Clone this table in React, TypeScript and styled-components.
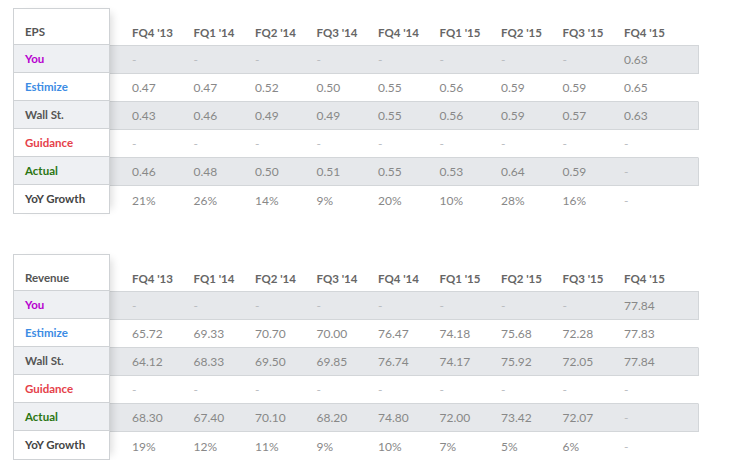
import styled, { createGlobalStyle } from "styled-components";

const GlobalStyle = createGlobalStyle`
  body {
    margin: 0;
    background: #fff;
    font-family: Lato, "Open Sans", sans-serif;
  }
`;

const Page = styled.div`
  display: flex;
  flex-direction: column;
  gap: 40px;
  padding: 8px 0 0 13px;
  width: 686px;
`;

const Table = styled.section`
  display: flex;
`;

const LabelColumn = styled.div`
  position: relative;
  z-index: 1;
  width: 95px;
  flex-shrink: 0;
  border: 1px solid #cfd2d5;
  background: #fff;
  box-shadow: 7px 0 8px -5px rgba(0, 0, 0, 0.14);
`;

const HeaderLabel = styled.div`
  height: 36px;
  display: flex;
  align-items: flex-end;
  padding: 0 0 6px 11px;
  box-sizing: border-box;
  border-bottom: 1px solid #cfd2d5;
  font-size: 11.5px;
  font-weight: 700;
  color: #555;
`;

const RowLabel = styled.div<{ $shade: boolean; $color: string; $last: boolean }>`
  height: 27px;
  display: flex;
  align-items: center;
  padding-left: 11px;
  border-bottom: ${(p) => (p.$last ? "none" : "1px solid #cfd2d5")};
  background: ${(p) => (p.$shade ? "#eef0f3" : "#fff")};
  color: ${(p) => p.$color};
  font-size: 11.5px;
  font-weight: 700;
`;

const DataColumn = styled.div`
  flex: 1;
  padding-top: 1px;
`;

const grid = `
  display: grid;
  grid-template-columns: repeat(8, 61.5px) 1fr;
  padding-left: 22px;
  box-sizing: border-box;
`;

const HeaderRow = styled.div`
  ${grid}
  height: 37px;
  align-items: end;
  padding-bottom: 6px;
  border-bottom: 1px solid #d3d6d9;
  font-size: 11.5px;
  font-weight: 700;
  color: #666;
`;

const DataRow = styled.div<{ $shade: boolean; $last: boolean }>`
  ${grid}
  height: 28px;
  align-items: center;
  background: ${(p) => (p.$shade ? "#e6e8eb" : "#fff")};
  border-bottom: ${(p) => (p.$last ? "none" : "1px solid #d3d6d9")};
  border-right: 1px solid ${(p) => (p.$shade ? "#d3d6d9" : "transparent")};
  font-size: 12px;
  color: #888;
`;

const Value = styled.span<{ $empty: boolean }>`
  color: ${(p) => (p.$empty ? "#b8bbbf" : "#888")};
`;

const quarters = [
  "FQ4 '13",
  "FQ1 '14",
  "FQ2 '14",
  "FQ3 '14",
  "FQ4 '14",
  "FQ1 '15",
  "FQ2 '15",
  "FQ3 '15",
  "FQ4 '15",
];

const labels = [
  { name: "You", color: "#b700cf" },
  { name: "Estimize", color: "#3c8ce4" },
  { name: "Wall St.", color: "#555" },
  { name: "Guidance", color: "#e5414a" },
  { name: "Actual", color: "#2b7612" },
  { name: "YoY Growth", color: "#444" },
];

const eps = [
  ["-", "-", "-", "-", "-", "-", "-", "-", "0.63"],
  ["0.47", "0.47", "0.52", "0.50", "0.55", "0.56", "0.59", "0.59", "0.65"],
  ["0.43", "0.46", "0.49", "0.49", "0.55", "0.56", "0.59", "0.57", "0.63"],
  ["-", "-", "-", "-", "-", "-", "-", "-", "-"],
  ["0.46", "0.48", "0.50", "0.51", "0.55", "0.53", "0.64", "0.59", "-"],
  ["21%", "26%", "14%", "9%", "20%", "10%", "28%", "16%", "-"],
];

const revenue = [
  ["-", "-", "-", "-", "-", "-", "-", "-", "77.84"],
  ["65.72", "69.33", "70.70", "70.00", "76.47", "74.18", "75.68", "72.28", "77.83"],
  ["64.12", "68.33", "69.50", "69.85", "76.74", "74.17", "75.92", "72.05", "77.84"],
  ["-", "-", "-", "-", "-", "-", "-", "-", "-"],
  ["68.30", "67.40", "70.10", "68.20", "74.80", "72.00", "73.42", "72.07", "-"],
  ["19%", "12%", "11%", "9%", "10%", "7%", "5%", "6%", "-"],
];

type TableProps = {
  title: string;
  rows: string[][];
};

const EstimateTable: React.FC<TableProps> = ({ title, rows }) => (
  <Table>
    <LabelColumn>
      <HeaderLabel>{title}</HeaderLabel>
      {labels.map((l, i) => (
        <RowLabel
          key={l.name}
          $shade={i % 2 === 0}
          $color={l.color}
          $last={i === labels.length - 1}
        >
          {l.name}
        </RowLabel>
      ))}
    </LabelColumn>
    <DataColumn>
      <HeaderRow>
        {quarters.map((q) => (
          <span key={q}>{q}</span>
        ))}
      </HeaderRow>
      {rows.map((row, i) => (
        <DataRow key={i} $shade={i % 2 === 0} $last={i === rows.length - 1}>
          {row.map((v, j) => (
            <Value key={j} $empty={v === "-"}>
              {v}
            </Value>
          ))}
        </DataRow>
      ))}
    </DataColumn>
  </Table>
);

export default function App() {
  return (
    <>
      <GlobalStyle />
      <Page>
        <EstimateTable title="EPS" rows={eps} />
        <EstimateTable title="Revenue" rows={revenue} />
      </Page>
    </>
  );
}
